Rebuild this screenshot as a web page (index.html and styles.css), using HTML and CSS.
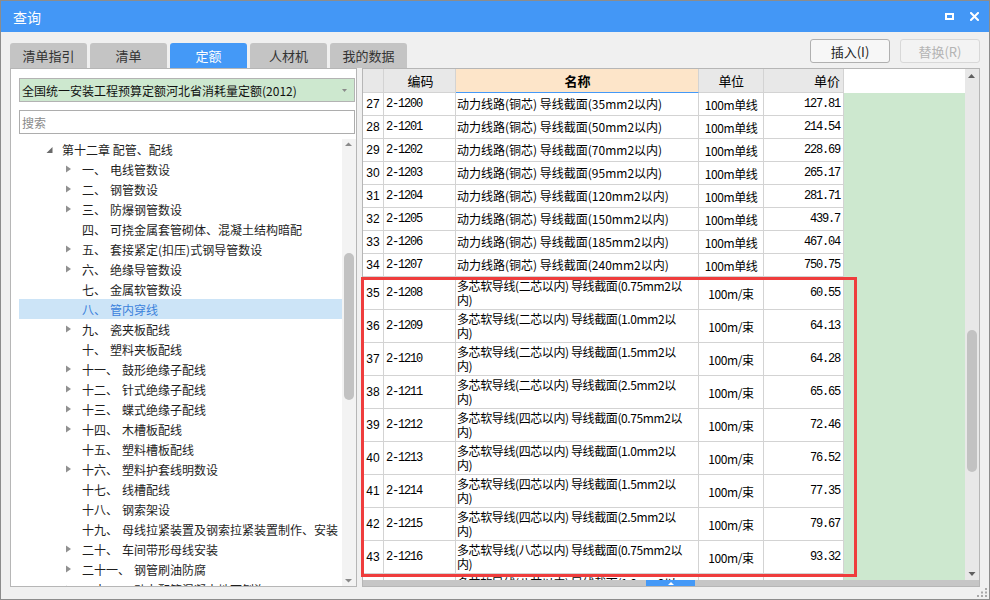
FILE: index.html
```html
<!DOCTYPE html>
<html lang="zh">
<head>
<meta charset="utf-8">
<title>查询</title>
<link rel="stylesheet" href="styles.css">
</head>
<body>
<div class="window">
  <div class="titlebar">
    <span class="title">查询</span>
    <div class="winbtns">
      <svg width="9" height="7" viewBox="0 0 9 7"><rect x="1" y="1" width="7" height="5" fill="none" stroke="#fff" stroke-width="2"/></svg>
      <svg width="9" height="9" viewBox="0 0 9 9"><path d="M1 1L8 8M8 1L1 8" stroke="#fff" stroke-width="2" stroke-linecap="square"/></svg>
    </div>
  </div>

  <div class="toprow">
    <div class="tabs">
      <div class="tab">清单指引</div>
      <div class="tab">清单</div>
      <div class="tab active">定额</div>
      <div class="tab">人材机</div>
      <div class="tab">我的数据</div>
    </div>
    <div class="actions">
      <button class="btn">插入(I)</button>
      <button class="btn" disabled>替换(R)</button>
    </div>
  </div>

  <div class="main">
    <div class="left">
      <div class="combo">
        <span class="combo-text">全国统一安装工程预算定额河北省消耗量定额(2012)</span>
        <svg class="combo-arrow" width="5" height="3" viewBox="0 0 5 3"><polygon points="0,0 5,0 2.5,3" fill="#8a8a8a"/></svg>
      </div>
      <input class="search" type="text" placeholder="搜索">
      <div class="tree">
        <div class="list">
          <div class="node l1"><svg class="tg" viewBox="0 0 14 20"><polygon points="9.5,8 9.5,14 3.5,14" fill="#6a6a6a"/></svg><span>第十二章 配管、配线</span></div>
          <div class="node l2"><svg class="tg" viewBox="0 0 14 20"><polygon points="3,6.5 8,10 3,13.5" fill="#909090"/></svg><span class="num">一、</span><span>电线管数设</span></div>
          <div class="node l2"><svg class="tg" viewBox="0 0 14 20"><polygon points="3,6.5 8,10 3,13.5" fill="#909090"/></svg><span class="num">二、</span><span>钢管数设</span></div>
          <div class="node l2"><svg class="tg" viewBox="0 0 14 20"><polygon points="3,6.5 8,10 3,13.5" fill="#909090"/></svg><span class="num">三、</span><span>防爆钢管数设</span></div>
          <div class="node l2"><span class="tg"></span><span class="num">四、</span><span>可挠金属套管砌体、混凝土结构暗配</span></div>
          <div class="node l2"><svg class="tg" viewBox="0 0 14 20"><polygon points="3,6.5 8,10 3,13.5" fill="#909090"/></svg><span class="num">五、</span><span>套接紧定(扣压)式钢导管数设</span></div>
          <div class="node l2"><svg class="tg" viewBox="0 0 14 20"><polygon points="3,6.5 8,10 3,13.5" fill="#909090"/></svg><span class="num">六、</span><span>绝缘导管数设</span></div>
          <div class="node l2"><span class="tg"></span><span class="num">七、</span><span>金属软管数设</span></div>
          <div class="node l2 sel"><span class="tg"></span><span class="num">八、</span><span>管内穿线</span></div>
          <div class="node l2"><svg class="tg" viewBox="0 0 14 20"><polygon points="3,6.5 8,10 3,13.5" fill="#909090"/></svg><span class="num">九、</span><span>瓷夹板配线</span></div>
          <div class="node l2"><span class="tg"></span><span class="num">十、</span><span>塑料夹板配线</span></div>
          <div class="node l2"><svg class="tg" viewBox="0 0 14 20"><polygon points="3,6.5 8,10 3,13.5" fill="#909090"/></svg><span class="num">十一、</span><span>鼓形绝缘子配线</span></div>
          <div class="node l2"><svg class="tg" viewBox="0 0 14 20"><polygon points="3,6.5 8,10 3,13.5" fill="#909090"/></svg><span class="num">十二、</span><span>针式绝缘子配线</span></div>
          <div class="node l2"><svg class="tg" viewBox="0 0 14 20"><polygon points="3,6.5 8,10 3,13.5" fill="#909090"/></svg><span class="num">十三、</span><span>蝶式绝缘子配线</span></div>
          <div class="node l2"><svg class="tg" viewBox="0 0 14 20"><polygon points="3,6.5 8,10 3,13.5" fill="#909090"/></svg><span class="num">十四、</span><span>木槽板配线</span></div>
          <div class="node l2"><span class="tg"></span><span class="num">十五、</span><span>塑料槽板配线</span></div>
          <div class="node l2"><svg class="tg" viewBox="0 0 14 20"><polygon points="3,6.5 8,10 3,13.5" fill="#909090"/></svg><span class="num">十六、</span><span>塑料护套线明数设</span></div>
          <div class="node l2"><span class="tg"></span><span class="num">十七、</span><span>线槽配线</span></div>
          <div class="node l2"><span class="tg"></span><span class="num">十八、</span><span>钢索架设</span></div>
          <div class="node l2"><span class="tg"></span><span class="num">十九、</span><span>母线拉紧装置及钢索拉紧装置制作、安装</span></div>
          <div class="node l2"><svg class="tg" viewBox="0 0 14 20"><polygon points="3,6.5 8,10 3,13.5" fill="#909090"/></svg><span class="num">二十、</span><span>车间带形母线安装</span></div>
          <div class="node l2"><svg class="tg" viewBox="0 0 14 20"><polygon points="3,6.5 8,10 3,13.5" fill="#909090"/></svg><span class="num">二十一、</span><span>钢管刷油防腐</span></div>
          <div class="node l2"><svg class="tg" viewBox="0 0 14 20"><polygon points="3,6.5 8,10 3,13.5" fill="#909090"/></svg><span class="num">二十二、</span><span>动力配管混凝土地面刨沟</span></div>
        </div>
        <div class="vs">
          <svg width="14" height="10" viewBox="0 0 14 10"><polygon points="3,7 10,7 6.5,3.5" fill="#8a8a8a"/></svg>
          <div class="thumb tree-thumb"></div>
          <svg class="vs-down" width="14" height="10" viewBox="0 0 14 10"><polygon points="3,3 10,3 6.5,6.5" fill="#8a8a8a"/></svg>
        </div>
      </div>
    </div>

    <div class="right">
      <div class="sheet">
        <div class="row hd">
          <div class="c-no"></div>
          <div class="c-code ctr">编码</div>
          <div class="c-name ctr name-hd">名称</div>
          <div class="c-unit ctr">单位</div>
          <div class="c-price ctr">单价</div>
          <div class="fill"></div>
        </div>
        <div class="row"><div class="c-no">27</div><div class="c-code mono">2-1200</div><div class="c-name">动力线路(铜芯) 导线截面(35mm2以内)</div><div class="c-unit">100m单线</div><div class="c-price mono">127.81</div><div class="fill"></div></div>
        <div class="row"><div class="c-no">28</div><div class="c-code mono">2-1201</div><div class="c-name">动力线路(铜芯) 导线截面(50mm2以内)</div><div class="c-unit">100m单线</div><div class="c-price mono">214.54</div><div class="fill"></div></div>
        <div class="row"><div class="c-no">29</div><div class="c-code mono">2-1202</div><div class="c-name">动力线路(铜芯) 导线截面(70mm2以内)</div><div class="c-unit">100m单线</div><div class="c-price mono">228.69</div><div class="fill"></div></div>
        <div class="row"><div class="c-no">30</div><div class="c-code mono">2-1203</div><div class="c-name">动力线路(铜芯) 导线截面(95mm2以内)</div><div class="c-unit">100m单线</div><div class="c-price mono">265.17</div><div class="fill"></div></div>
        <div class="row"><div class="c-no">31</div><div class="c-code mono">2-1204</div><div class="c-name">动力线路(铜芯) 导线截面(120mm2以内)</div><div class="c-unit">100m单线</div><div class="c-price mono">281.71</div><div class="fill"></div></div>
        <div class="row"><div class="c-no">32</div><div class="c-code mono">2-1205</div><div class="c-name">动力线路(铜芯) 导线截面(150mm2以内)</div><div class="c-unit">100m单线</div><div class="c-price mono">439.7</div><div class="fill"></div></div>
        <div class="row"><div class="c-no">33</div><div class="c-code mono">2-1206</div><div class="c-name">动力线路(铜芯) 导线截面(185mm2以内)</div><div class="c-unit">100m单线</div><div class="c-price mono">467.04</div><div class="fill"></div></div>
        <div class="row"><div class="c-no">34</div><div class="c-code mono">2-1207</div><div class="c-name">动力线路(铜芯) 导线截面(240mm2以内)</div><div class="c-unit">100m单线</div><div class="c-price mono">750.75</div><div class="fill"></div></div>
        <div class="row t"><div class="c-no">35</div><div class="c-code mono">2-1208</div><div class="c-name">多芯软导线(二芯以内) 导线截面(0.75mm2以<br>内)</div><div class="c-unit">100m/束</div><div class="c-price mono">60.55</div><div class="fill"></div></div>
        <div class="row t"><div class="c-no">36</div><div class="c-code mono">2-1209</div><div class="c-name">多芯软导线(二芯以内) 导线截面(1.0mm2以<br>内)</div><div class="c-unit">100m/束</div><div class="c-price mono">64.13</div><div class="fill"></div></div>
        <div class="row t"><div class="c-no">37</div><div class="c-code mono">2-1210</div><div class="c-name">多芯软导线(二芯以内) 导线截面(1.5mm2以<br>内)</div><div class="c-unit">100m/束</div><div class="c-price mono">64.28</div><div class="fill"></div></div>
        <div class="row t"><div class="c-no">38</div><div class="c-code mono">2-1211</div><div class="c-name">多芯软导线(二芯以内) 导线截面(2.5mm2以<br>内)</div><div class="c-unit">100m/束</div><div class="c-price mono">65.65</div><div class="fill"></div></div>
        <div class="row t"><div class="c-no">39</div><div class="c-code mono">2-1212</div><div class="c-name">多芯软导线(四芯以内) 导线截面(0.75mm2以<br>内)</div><div class="c-unit">100m/束</div><div class="c-price mono">72.46</div><div class="fill"></div></div>
        <div class="row t"><div class="c-no">40</div><div class="c-code mono">2-1213</div><div class="c-name">多芯软导线(四芯以内) 导线截面(1.0mm2以<br>内)</div><div class="c-unit">100m/束</div><div class="c-price mono">76.52</div><div class="fill"></div></div>
        <div class="row t"><div class="c-no">41</div><div class="c-code mono">2-1214</div><div class="c-name">多芯软导线(四芯以内) 导线截面(1.5mm2以<br>内)</div><div class="c-unit">100m/束</div><div class="c-price mono">77.35</div><div class="fill"></div></div>
        <div class="row t"><div class="c-no">42</div><div class="c-code mono">2-1215</div><div class="c-name">多芯软导线(四芯以内) 导线截面(2.5mm2以<br>内)</div><div class="c-unit">100m/束</div><div class="c-price mono">79.67</div><div class="fill"></div></div>
        <div class="row t"><div class="c-no">43</div><div class="c-code mono">2-1216</div><div class="c-name">多芯软导线(八芯以内) 导线截面(0.75mm2以<br>内)</div><div class="c-unit">100m/束</div><div class="c-price mono">93.32</div><div class="fill"></div></div>
        <div class="row t"><div class="c-no">44</div><div class="c-code mono">2-1217</div><div class="c-name">多芯软导线(八芯以内) 导线截面(1.0mm2以<br>内)</div><div class="c-unit">100m/束</div><div class="c-price mono">98.17</div><div class="fill"></div></div>
      </div>
      <div class="vscroll">
        <svg width="14" height="14" viewBox="0 0 14 14"><polygon points="3,9 10,9 6.5,5" fill="#5f5f5f"/></svg>
        <div class="thumb grid-thumb"></div>
        <svg class="vs-down" width="14" height="14" viewBox="0 0 14 14"><polygon points="3.5,6 10.5,6 7,10" fill="#5f5f5f"/></svg>
      </div>
      <div class="hscroll">
        <div class="hthumb"><svg width="49" height="6" viewBox="0 0 49 6"><polygon points="22,5 28,5 25,2" fill="#fff"/></svg></div>
      </div>
      <div class="mark"></div>
    </div>
  </div>

  <div class="status">
    <svg width="10" height="9" viewBox="0 0 10 9"><g fill="#a8a8a8"><rect x="8" y="0" width="2" height="2"/><rect x="4" y="3.5" width="2" height="2"/><rect x="8" y="3.5" width="2" height="2"/><rect x="0" y="7" width="2" height="2"/><rect x="4" y="7" width="2" height="2"/><rect x="8" y="7" width="2" height="2"/></g></svg>
  </div>
</div>
</body>
</html>
```

FILE: styles.css
```css
* { box-sizing: border-box; margin: 0; padding: 0; }
html, body { width: 990px; height: 600px; overflow: hidden; }
body { font-family: "Noto Sans CJK SC", "Noto Sans", sans-serif; background: #fff; color: #111; }

.window {
  width: 990px; height: 600px;
  border: 1px solid #8c8c8c;
  background: #f0f0f0;
  display: flex; flex-direction: column;
}

.titlebar {
  flex: none; height: 31px;
  background: #4397f6;
  color: #fff;
  display: flex; align-items: center;
  padding-left: 12px;
}
.title { font-size: 14px; line-height: 1; }
.winbtns { margin-left: auto; display: flex; align-items: center; gap: 16px; padding-right: 10px; }
.winbtns svg { display: block; }

.toprow { flex: none; height: 36px; display: flex; padding: 0 9px; }
.tabs { display: flex; gap: 3px; align-self: flex-end; }
.tab {
  width: 77px; height: 25px; line-height: 25px;
  text-align: center; font-size: 13px; color: #333;
  background: #c4c4c4; border-radius: 3px 3px 0 0;
}
.tab.active { background: #4499f7; color: #fff; }

.actions { margin-left: auto; margin-top: 7px; display: flex; gap: 10px; align-self: flex-start; }
.btn {
  width: 80px; height: 24px;
  font-family: "Noto Sans CJK SC", sans-serif; font-size: 13px; color: #222;
  background: #f7f7f7; border: 1px solid #b0b0b0; border-radius: 3px;
}
.btn:disabled { color: #b4b4b4; border-color: #d8d8d8; background: #f3f3f3; }

.main { flex: none; height: 519px; display: flex; gap: 5px; padding: 0 9px; }

.left {
  width: 347px; background: #fff;
  border: 1px solid #b6b6b6;
  display: flex; flex-direction: column;
  padding: 9px 0 0 8px;
}
.combo {
  flex: none; height: 24px; margin-right: 1px;
  background: #cde8cf; border: 1px solid #b3b3b3;
  display: flex; align-items: center;
  padding-left: 2px;
  font-size: 12px; color: #111;
}
.combo-arrow { margin-left: auto; margin-right: 7px; display: block; }
.search {
  flex: none; height: 24px; margin-top: 8px; margin-right: 1px;
  border: 1px solid #adadad; background: #fff;
  padding-left: 2px;
  font-family: "Noto Sans CJK SC", sans-serif; font-size: 12px; outline: none;
}
.search::placeholder { color: #8a8a8a; }

.tree { flex: 1; min-height: 0; display: flex; margin-top: 5px; }
.list { flex: 1; overflow: hidden; }
.node {
  height: 20px; display: flex; align-items: center;
  font-size: 12px; color: #1e1e1e; white-space: nowrap;
}
.node.l1 { padding-left: 24px; }
.node.l2 { padding-left: 44px; }
.node.sel { background: #cce4f7; color: #3b82dc; }
.tg { flex: none; width: 14px; height: 20px; margin-right: 5px; display: block; }
.num { margin-right: 4px; }

.vs {
  flex: none; width: 14px; background: #f3f3f3;
  display: flex; flex-direction: column; align-items: center;
}
.vs svg { display: block; flex: none; }
.vs-down { margin-top: auto; }
.thumb { flex: none; width: 10px; border-radius: 5px; background: #c2c2c2; }
.tree-thumb { margin-top: 104px; height: 147px; }

.right {
  width: 618px; position: relative;
  background: #fff; border: 1px solid #b6b6b6;
  display: grid;
  grid-template-columns: 1fr 14px;
  grid-template-rows: 1fr 6px;
}
.sheet { overflow: hidden; min-height: 0; }
.row {
  display: grid;
  grid-template-columns: 21px 72px 243px 65px 80px 1fr;
  height: 23px;
  font-size: 12px; color: #000;
}
.row.t { height: 33px; }
.row > div {
  border-right: 1px solid #d3d3d3;
  border-bottom: 1px solid #d3d3d3;
  display: flex; align-items: center;
  white-space: nowrap; overflow: hidden;
}
.row > .fill { border: none; background: #cde8cf; }
.row.hd { height: 24px; font-size: 13px; }
.row.hd > div { background: #e8e8e8; }
.row.hd > .fill { background: #fff; }
.row.hd > .name-hd { background: #fde5c9; border-bottom-color: #4499f7; font-weight: bold; }
.ctr { justify-content: center; }

.c-no { justify-content: center; font-family: "Liberation Sans", sans-serif; }
.c-code { padding-left: 2px; }
.c-name { padding-left: 1px; line-height: 14px; }
.row.t .c-name { letter-spacing: -0.4px; }
.c-unit { justify-content: center; letter-spacing: -0.4px; }
.c-price { justify-content: flex-end; padding-right: 3px; }
.mono { font-family: "Liberation Mono", monospace; letter-spacing: -1.2px; }

.vscroll {
  background: #e8e8e8;
  display: flex; flex-direction: column; align-items: center;
}
.vscroll svg { display: block; flex: none; }
.grid-thumb { margin-top: 247px; height: 142px; }

.hscroll { grid-column: 1 / 3; background: #c6c6c6; display: flex; }
.hthumb { margin-left: 283px; width: 49px; height: 6px; background: #4499f7; }
.hthumb svg { display: block; }

.mark {
  position: absolute; left: -2px; top: 208px;
  width: 496px; height: 300px;
  border: 3px solid #ef3d3d;
  pointer-events: none;
}

.status { flex: 1; display: flex; justify-content: flex-end; align-items: flex-start; padding: 1px 2px 0 0; }
.status svg { display: block; }
```
